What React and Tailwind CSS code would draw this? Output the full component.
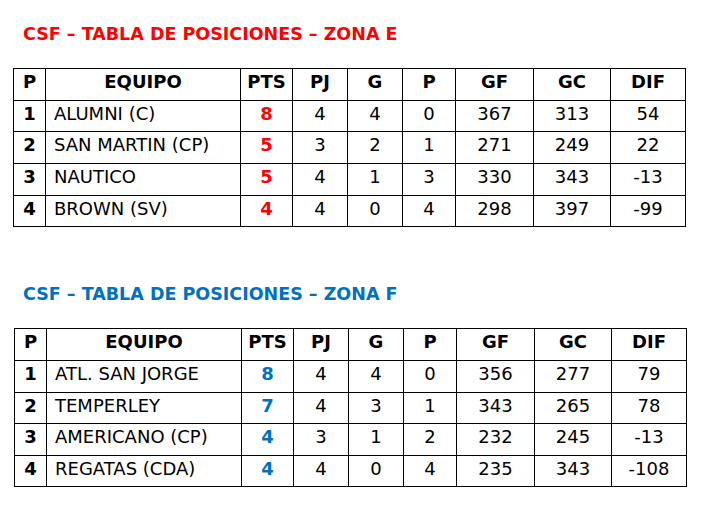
import React from 'react';

const zonaE = [
  { p: 1, equipo: 'ALUMNI (C)', pts: 8, pj: 4, g: 4, pe: 0, gf: 367, gc: 313, dif: 54 },
  { p: 2, equipo: 'SAN MARTIN (CP)', pts: 5, pj: 3, g: 2, pe: 1, gf: 271, gc: 249, dif: 22 },
  { p: 3, equipo: 'NAUTICO', pts: 5, pj: 4, g: 1, pe: 3, gf: 330, gc: 343, dif: -13 },
  { p: 4, equipo: 'BROWN (SV)', pts: 4, pj: 4, g: 0, pe: 4, gf: 298, gc: 397, dif: -99 },
];

const zonaF = [
  { p: 1, equipo: 'ATL. SAN JORGE', pts: 8, pj: 4, g: 4, pe: 0, gf: 356, gc: 277, dif: 79 },
  { p: 2, equipo: 'TEMPERLEY', pts: 7, pj: 4, g: 3, pe: 1, gf: 343, gc: 265, dif: 78 },
  { p: 3, equipo: 'AMERICANO (CP)', pts: 4, pj: 3, g: 1, pe: 2, gf: 232, gc: 245, dif: -13 },
  { p: 4, equipo: 'REGATAS (CDA)', pts: 4, pj: 4, g: 0, pe: 4, gf: 235, gc: 343, dif: -108 },
];

const headers = ['P', 'EQUIPO', 'PTS', 'PJ', 'G', 'P', 'GF', 'GC', 'DIF'];

// rows: array of row heights as full class names (header first)
const Tabla = ({ rows, ptsColor, alturas }) => {
  const cell = 'border-r border-b border-black pt-px text-center';
  return (
    <div className="grid grid-cols-[32px_195px_52px_55px_55px_53px_78px_77px_75px] w-max border-l border-t border-black">
      {headers.map((h, i) => (
        <div key={i} className={`${cell} font-bold ${alturas[0]}`}>
          {h}
        </div>
      ))}
      {rows.map((r, idx) => {
        const h = alturas[idx + 1];
        return (
          <React.Fragment key={r.p}>
            <div className={`${cell} font-bold ${h}`}>{r.p}</div>
            <div className={`border-r border-b border-black pt-px pl-[8px] text-left ${h}`}>{r.equipo}</div>
            <div className={`${cell} font-bold ${ptsColor} ${h}`}>{r.pts}</div>
            <div className={`${cell} ${h}`}>{r.pj}</div>
            <div className={`${cell} ${h}`}>{r.g}</div>
            <div className={`${cell} ${h}`}>{r.pe}</div>
            <div className={`${cell} ${h}`}>{r.gf}</div>
            <div className={`${cell} ${h}`}>{r.gc}</div>
            <div className={`${cell} ${h}`}>{r.dif}</div>
          </React.Fragment>
        );
      })}
    </div>
  );
};

const App = () => {
  return (
    <div className="w-[717px] h-[529px] bg-white text-black font-['Verdana','DejaVu_Sans',sans-serif] text-[18px] leading-[24px]">
      <div className="pl-[13px] pt-[22px]">
        <h1 className="pl-[10px] text-[17.5px] leading-[24px] font-bold text-[#ff0000]">
          CSF – TABLA DE POSICIONES – ZONA E
        </h1>
        <div className="mt-[22px]">
          <Tabla
            rows={zonaE}
            ptsColor="text-[#ff0000]"
            alturas={['h-[32px]', 'h-[31px]', 'h-[32px]', 'h-[32px]', 'h-[31px]']}
          />
        </div>
        <h1 className="pl-[10px] mt-[55px] text-[17.5px] leading-[24px] font-bold text-[#0070c0]">
          CSF – TABLA DE POSICIONES – ZONA F
        </h1>
        <div className="mt-[22px] ml-px">
          <Tabla
            rows={zonaF}
            ptsColor="text-[#0070c0]"
            alturas={['h-[32px]', 'h-[32px]', 'h-[31px]', 'h-[32px]', 'h-[31px]']}
          />
        </div>
      </div>
    </div>
  );
};

export default App;
